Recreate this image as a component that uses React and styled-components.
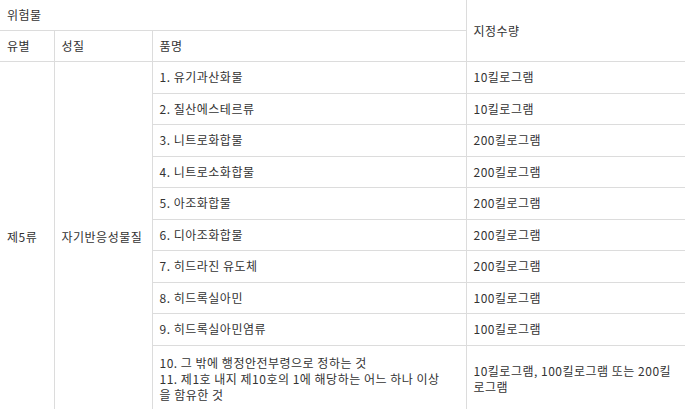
import React from "react";
import styled, { createGlobalStyle } from "styled-components";

const items = [
  ["1. 유기과산화물", "10킬로그램"],
  ["2. 질산에스테르류", "10킬로그램"],
  ["3. 니트로화합물", "200킬로그램"],
  ["4. 니트로소화합물", "200킬로그램"],
  ["5. 아조화합물", "200킬로그램"],
  ["6. 디아조화합물", "200킬로그램"],
  ["7. 히드라진 유도체", "200킬로그램"],
  ["8. 히드록실아민", "100킬로그램"],
  ["9. 히드록실아민염류", "100킬로그램"],
];

const Global = createGlobalStyle`
  body {
    margin: 0;
    background: #fff;
    font-family: "Noto Sans CJK KR", "Noto Sans", sans-serif;
  }
`;

const Table = styled.table`
  width: 685px;
  border-collapse: collapse;
  border-style: hidden;
  table-layout: fixed;
  font-size: 12px;
  letter-spacing: 0.5px;
  color: #333;
`;

const Cell = styled.td`
  border: 1px solid #dcdcdc;
  padding: 7px 7px;
  line-height: 16.5px;
  text-align: left;
  font-weight: normal;
  vertical-align: middle;
`;

const Head = styled(Cell).attrs({ as: "th" })`
  padding: 7px 7px;
  line-height: 16px;
`;

const Multi = styled(Cell)`
  padding: 9px ${(p) => p.$right || 7}px 9px 7px;
  line-height: 16px;
`;

export default function App() {
  return (
    <>
      <Global />
      <Table>
        <colgroup>
          <col style={{ width: 54 }} />
          <col style={{ width: 98 }} />
          <col style={{ width: 314 }} />
          <col style={{ width: 219 }} />
        </colgroup>
        <thead>
          <tr>
            <Head colSpan={3}>위험물</Head>
            <Head rowSpan={2}>지정수량</Head>
          </tr>
          <tr>
            <Head>유별</Head>
            <Head>성질</Head>
            <Head>품명</Head>
          </tr>
        </thead>
        <tbody>
          {items.map(([name, qty], i) => (
            <tr key={name}>
              {i === 0 && (
                <>
                  <Cell rowSpan={items.length + 1}>제5류</Cell>
                  <Cell rowSpan={items.length + 1}>자기반응성물질</Cell>
                </>
              )}
              <Cell>{name}</Cell>
              <Cell>{qty}</Cell>
            </tr>
          ))}
          <tr>
            <Multi $right={16}>
              10. 그 밖에 행정안전부령으로 정하는 것
              <br />
              11. 제1호 내지 제10호의 1에 해당하는 어느 하나 이상을 함유한 것
            </Multi>
            <Multi>10킬로그램, 100킬로그램 또는 200킬로그램</Multi>
          </tr>
        </tbody>
      </Table>
    </>
  );
}
